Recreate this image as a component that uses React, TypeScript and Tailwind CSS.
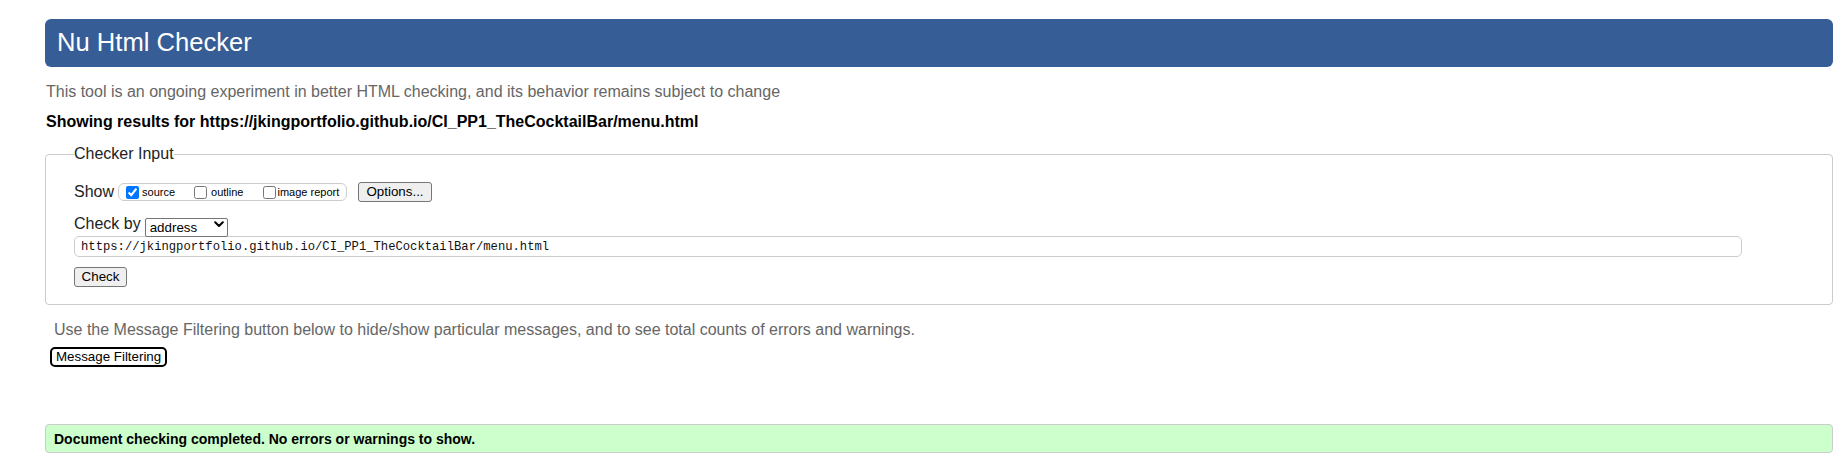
import React from "react";

export default function App() {
  return (
    <div className="min-h-[461px] bg-white pl-[45px] pr-[13px] pt-[19px] font-['Liberation_Sans',Arial,sans-serif] text-black">
      <h1 className="flex h-[48px] items-center rounded-[6px] bg-[#365d95] pl-[12px] text-[25.6px] font-normal leading-none text-white">
        Nu Html Checker
      </h1>
      <p className="mt-[16px] pl-[1px] text-[16px] leading-[18px] text-[#666]">
        This tool is an ongoing experiment in better HTML checking, and its behavior remains subject to change
      </p>
      <p className="mt-[12px] pl-[1px] text-[16px] font-bold leading-[18px]">
        Showing results for https://jkingportfolio.github.io/CI_PP1_TheCocktailBar/menu.html
      </p>

      <fieldset className="mt-[14px] rounded-[4px] border border-[#ccc] pb-[17px] pl-[28px]">
        <legend className="text-[16px] leading-[18px] text-[#222]">Checker Input</legend>

        <div className="mt-[19px] flex h-[20px] items-center">
          <span className="text-[16px] leading-[18px] text-[#222]">Show</span>
          <div className="ml-[4px] flex h-[18px] w-[229px] items-center rounded-[6px] border border-[#ccc] pl-[7px] text-[11px] leading-none">
            <label className="flex items-center">
              <input type="checkbox" defaultChecked className="m-0 h-[13px] w-[13px] accent-[#0075ff]" />
              <span className="ml-[3px]">source</span>
            </label>
            <label className="ml-[19px] flex items-center">
              <input type="checkbox" className="m-0 h-[13px] w-[13px]" />
              <span className="ml-[4px]">outline</span>
            </label>
            <label className="ml-[20px] flex items-center">
              <input type="checkbox" className="m-0 h-[13px] w-[13px]" />
              <span className="ml-[1px]">image report</span>
            </label>
          </div>
          <button className="ml-[11px] flex h-[20px] w-[74px] items-center justify-center rounded-[3px] border border-[#767676] bg-[#efefef] text-[13.33px] leading-none">
            Options...
          </button>
        </div>

        <div className="mt-[12px] flex h-[20px] items-center">
          <span className="text-[16px] leading-[18px] text-[#222]">Check by</span>
          <div className="relative ml-[4px] h-[19px] w-[83px]">
            <select
              defaultValue="address"
              className="h-[19px] w-[83px] appearance-none rounded-[2px] border border-[#767676] bg-white pl-[4px] text-[13.33px] leading-none"
            >
              <option value="address">address</option>
              <option value="file">file upload</option>
              <option value="text">text input</option>
            </select>
            <svg
              className="pointer-events-none absolute right-[4px] top-[6px]"
              width="10"
              height="7"
              viewBox="0 0 10 7"
              fill="none"
            >
              <path d="M1.2 1.2 L5 5 L8.8 1.2" stroke="#000" strokeWidth="2" strokeLinecap="round" strokeLinejoin="round" />
            </svg>
          </div>
        </div>

        <input
          type="text"
          readOnly
          value="https://jkingportfolio.github.io/CI_PP1_TheCocktailBar/menu.html"
          className="mt-[2px] block h-[21px] w-[1668px] rounded-[5px] border border-[#ccc] bg-white pl-[6px] font-['Liberation_Mono',Consolas,monospace] text-[12.2px] leading-none text-[#111]"
        />

        <button className="mt-[10px] flex h-[20px] w-[53px] items-center justify-center rounded-[3px] border border-[#767676] bg-[#efefef] text-[13.33px] leading-none">
          Check
        </button>
      </fieldset>

      <p className="ml-[9px] mt-[16px] text-[16px] leading-[18px] text-[#666]">
        Use the Message Filtering button below to hide/show particular messages, and to see total counts of errors and warnings.
      </p>
      <button className="ml-[5px] mt-[8px] flex h-[20px] items-center rounded-[5px] border-2 border-black bg-white px-[4px] text-[13.33px] leading-none">
        Message Filtering
      </button>

      <div className="mt-[57px] flex h-[29px] items-center rounded-[4px] border border-[#ccc] bg-[#ccffcc] pl-[8px] text-[14px] font-bold leading-none">
        Document checking completed. No errors or warnings to show.
      </div>
    </div>
  );
}
